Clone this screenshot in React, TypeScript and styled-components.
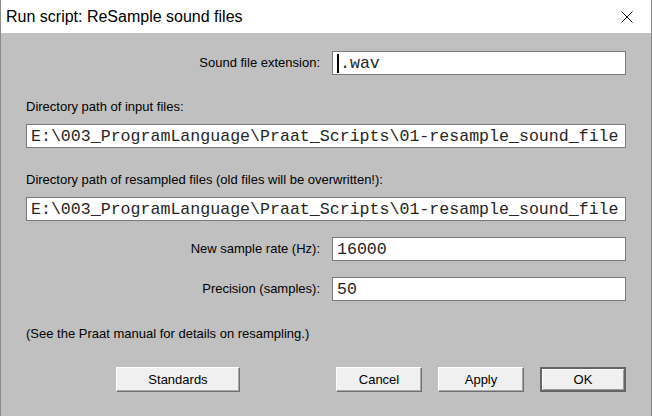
import React, { FC } from 'react'
import styled, { createGlobalStyle } from 'styled-components'

const GlobalStyle = createGlobalStyle`
  html, body {
    margin: 0;
    padding: 0;
    background: #c0c0c0;
  }
  * {
    box-sizing: border-box;
  }
`

const App: FC = () => {
  return (
    <Window>
      <GlobalStyle />
      <TitleBar>
        <Title>Run script: ReSample sound files</Title>
        <CloseButton>
          <svg width="12" height="12" viewBox="0 0 12 12">
            <path d="M0.5 0.5 L11.5 11.5 M11.5 0.5 L0.5 11.5" stroke="#111" strokeWidth="1" fill="none" />
          </svg>
        </CloseButton>
      </TitleBar>
      <Body>
        <InlineRow>
          <RowLabel>Sound file extension:</RowLabel>
          <Field>
            <Caret />
            .wav
          </Field>
        </InlineRow>
        <Block>
          <BlockLabel>Directory path of input files:</BlockLabel>
          <Field>E:\003_ProgramLanguage\Praat_Scripts\01-resample_sound_file</Field>
        </Block>
        <Block>
          <BlockLabel>Directory path of resampled files (old files will be overwritten!):</BlockLabel>
          <Field>E:\003_ProgramLanguage\Praat_Scripts\01-resample_sound_file</Field>
        </Block>
        <InlineRow $top={16}>
          <RowLabel>New sample rate (Hz):</RowLabel>
          <Field>16000</Field>
        </InlineRow>
        <InlineRow $top={16}>
          <RowLabel>Precision (samples):</RowLabel>
          <Field>50</Field>
        </InlineRow>
        <Note>(See the Praat manual for details on resampling.)</Note>
        <ButtonBar>
          <Button $width={124}>Standards</Button>
          <ButtonGroup>
            <Button>Cancel</Button>
            <Button>Apply</Button>
            <Button $default>OK</Button>
          </ButtonGroup>
        </ButtonBar>
      </Body>
    </Window>
  )
}

export default App

interface RowProps {
  $top?: number
}
interface ButtonProps {
  $width?: number
  $default?: boolean
}

const Window = styled.div`
  width: 652px;
  height: 416px;
  display: flex;
  flex-direction: column;
  background: #c0c0c0;
  border-left: 1px solid #8a8a8a;
  border-right: 1px solid #8a8a8a;
  overflow: hidden;
`

const TitleBar = styled.div`
  height: 33px;
  background: #ffffff;
  display: flex;
  align-items: center;
  justify-content: space-between;
  padding-left: 5px;
`

const Title = styled.span`
  font-family: 'Liberation Sans', Arial, sans-serif;
  font-size: 16px;
  color: #000;
`

const CloseButton = styled.div`
  width: 46px;
  height: 33px;
  display: flex;
  align-items: center;
  justify-content: center;
  margin-right: 1px;
`

const Body = styled.div`
  flex: 1;
  display: flex;
  flex-direction: column;
  padding: 18px 25px 0 25px;
  font-family: 'Liberation Sans', Arial, sans-serif;
  font-size: 13px;
  color: #000;
`

const InlineRow = styled.div<RowProps>`
  display: grid;
  grid-template-columns: 1fr 294px;
  column-gap: 12px;
  align-items: center;
  margin-top: ${(props) => props.$top ?? 0}px;
`

const RowLabel = styled.span`
  text-align: right;
  line-height: 16px;
`

const Block = styled.div`
  display: flex;
  flex-direction: column;
  margin-top: 24px;
`

const BlockLabel = styled.span`
  line-height: 16px;
  margin-bottom: 9px;
`

const Field = styled.div`
  height: 24px;
  background: #ffffff;
  border: 1px solid #7a7a7a;
  padding-left: 4px;
  display: flex;
  align-items: center;
  font-family: 'Liberation Mono', 'Courier New', monospace;
  font-size: 16.6px;
  color: #262626;
  white-space: pre;
  overflow: hidden;
`

const Caret = styled.span`
  width: 2px;
  height: 19px;
  background: #000;
  margin-right: 1px;
`

const Note = styled.div`
  line-height: 16px;
  margin-top: 25px;
`

const ButtonBar = styled.div`
  display: flex;
  justify-content: space-between;
  align-items: center;
  margin-top: 25px;
  padding-left: 90px;
`

const ButtonGroup = styled.div`
  display: flex;
  gap: 16px;
`

const Button = styled.button<ButtonProps>`
  width: ${(props) => props.$width ?? 86}px;
  height: 25px;
  padding: 0;
  font-family: 'Liberation Sans', Arial, sans-serif;
  font-size: 13px;
  color: #000;
  background: #f0f0f0;
  border: 1px solid;
  border-color: #ffffff #6f6f6f #6f6f6f #ffffff;
  box-shadow: inset -1px -1px 0 #a8a8a8;
  ${(props) =>
    props.$default &&
    `
    border: 2px solid #646464;
    box-shadow: inset 1px 1px 0 #ffffff, inset -1px -1px 0 #9a9a9a;
  `}
`
